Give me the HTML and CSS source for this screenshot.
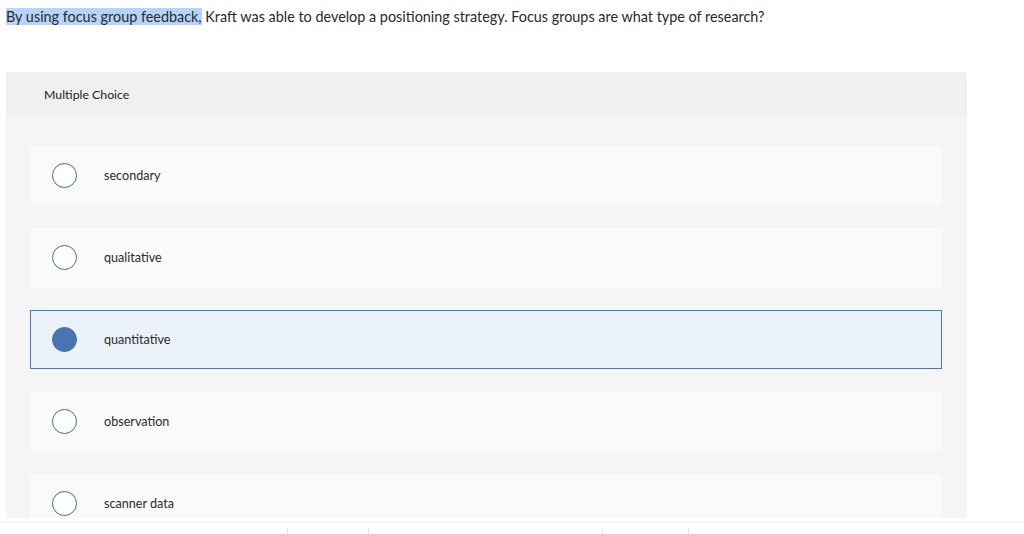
FILE: index.html
```html
<!DOCTYPE html>
<html>
<head>
<meta charset="utf-8">
<link rel="stylesheet" href="styles.css">
</head>
<body>
<p class="question"><span class="hl">By using focus group feedback,</span> Kraft was able to develop a positioning strategy. Focus groups are what type of research?</p>
<section class="card">
  <div class="card-head">Multiple Choice</div>
  <div class="options">
    <div class="option"><span class="radio"></span><span class="label">secondary</span></div>
    <div class="option"><span class="radio"></span><span class="label">qualitative</span></div>
    <div class="option selected"><span class="radio"></span><span class="label">quantitative</span></div>
    <div class="option"><span class="radio"></span><span class="label">observation</span></div>
    <div class="option"><span class="radio"></span><span class="label">scanner data</span></div>
  </div>
</section>
<footer class="foot">
  <span class="tick t1"></span>
  <span class="tick t2"></span>
  <span class="tick t3"></span>
  <span class="tick t4"></span>
</footer>
</body>
</html>
```

FILE: styles.css
```css
html, body {
  margin: 0;
  padding: 0;
  background: #ffffff;
}
body {
  font-family: Lato, "Noto Sans", sans-serif;
  color: #2b2b2b;
  width: 1024px;
  height: 534px;
  overflow: hidden;
}
.question {
  margin: 0;
  padding: 8px 6px 0 6px;
  font-size: 14.4px;
  line-height: 18px;
  height: 64px;
  box-sizing: border-box;
  color: #2a2a2a;
}
.hl {
  background: #b4d4fb;
}
.card {
  margin-left: 6px;
  width: 961px;
  height: 446px;
  background: #f5f5f5;
  border-radius: 3px 3px 0 0;
  overflow: hidden;
  margin-top: 8px;
}
.card-head {
  height: 45px;
  background: #f0f0f0;
  display: flex;
  align-items: center;
  padding-left: 38px;
  font-size: 12.3px;
  color: #222;
}
.options {
  display: flex;
  flex-direction: column;
  gap: 23px;
  padding: 29px 25px 0 24px;
}
.option {
  height: 59px;
  box-sizing: border-box;
  background: #fafafa;
  border-radius: 3px;
  display: flex;
  align-items: center;
  padding-left: 22px;
  gap: 27px;
  font-size: 12.6px;
  color: #2b2b2b;
  flex-shrink: 0;
}
.option.selected {
  background: #ebf2fa;
  border: 1px solid #4a78b8;
  border-radius: 0;
  padding-left: 21px;
}
.radio {
  width: 25px;
  height: 25px;
  box-sizing: border-box;
  border-radius: 50%;
  border: 1px solid #3f6ba8;
  background: #ffffff;
  flex-shrink: 0;
}
.selected .radio {
  background: #4775b2;
  border-color: #4272ad;
}
.foot {
  margin-top: 4px;
  border-top: 1px solid #efefef;
  height: 12px;
  position: relative;
}
.tick {
  position: absolute;
  top: 5px;
  width: 1px;
  height: 7px;
  background: #e6e6e6;
}
.t1 { left: 287px; }
.t2 { left: 368px; }
.t3 { left: 602px; }
.t4 { left: 688px; }
```
